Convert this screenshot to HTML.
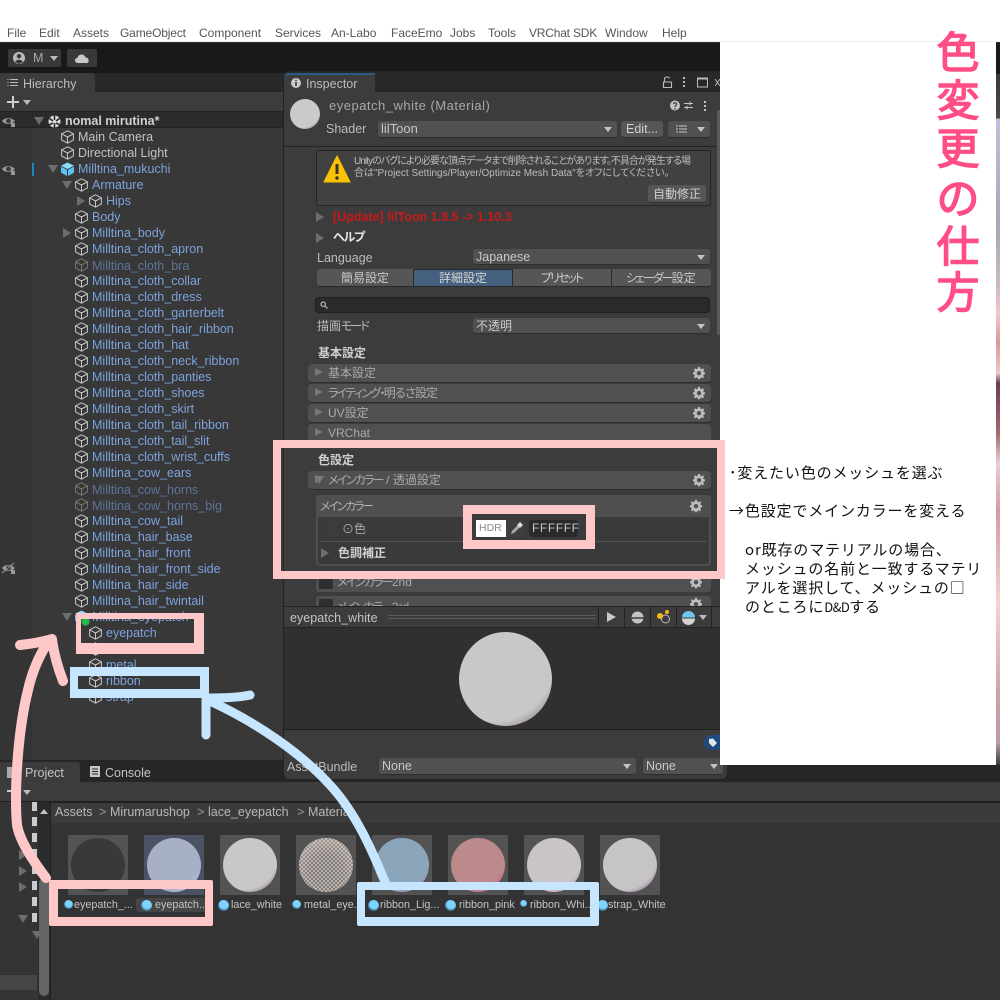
<!DOCTYPE html>
<html lang="ja"><head><meta charset="utf-8"><title>色変更の仕方</title>
<style>
html,body{margin:0;padding:0;width:1000px;height:1000px;overflow:hidden;background:#333}
body{position:relative;font-family:"Liberation Sans","Noto Sans CJK JP",sans-serif;font-size:12.5px;color:#c4c4c4;font-feature-settings:"palt"}
div,span.a{position:absolute;box-sizing:border-box}
.t{position:absolute;white-space:nowrap;line-height:16px;height:16px}
.m{top:25px;color:#555;font-size:12px}
.h{color:#7ba3dc;left:92px}
.h2{color:#7ba3dc;left:106px}
.dim{color:#5d7499}
svg{position:absolute;overflow:visible}
.dd{position:absolute;background:#515151;border-radius:3px;height:16px;line-height:16px;padding-left:3px;color:#c8c8c8;border-bottom:1px solid #2e2e2e}
.dd:after{content:"";position:absolute;right:5px;top:6px;border:4px solid transparent;border-top:5px solid #c4c4c4;border-bottom:0}
.btn{position:absolute;background:#565656;border-radius:3px;text-align:center;height:16px;line-height:16px;color:#d0d0d0;border-bottom:1px solid #2e2e2e}
.fold{position:absolute;left:308px;width:403px;height:19px;background:#505050;border-radius:4px;line-height:18px;padding-left:20px;color:#aaa;font-size:12px;border-bottom:1px solid #2c2c2c}
.fold:before{content:"";position:absolute;left:7px;top:4px;border:4.5px solid transparent;border-left:8px solid #777;border-right:0}
.j{font-size:12px}
.k{letter-spacing:-1.7px}
.b{font-weight:bold}
.thumb{position:absolute;top:835px;width:60px;height:60px;background:#535353}
.ball{position:absolute;left:3px;top:3px;width:54px;height:54px;border-radius:50%}
.lab{position:absolute;top:898px;font-size:10.8px;line-height:14px;color:#c4c4c4;white-space:nowrap}
.mi{position:absolute;top:900px;width:9px;height:9px;border-radius:50%;background:radial-gradient(circle at 55% 40%,#7fd4ff 45%,#2a5f80 75%)}
.tri{position:absolute;width:0;height:0;border:5px solid transparent;border-left:8px solid #6d6d6d;border-right:0}
.tri2{position:absolute;width:0;height:0;border:5px solid transparent;border-top:8px solid #6d6d6d;border-bottom:0}
.anno{position:absolute;font-family:"WenQuanYi Zen Hei","Noto Sans CJK JP",sans-serif;font-feature-settings:normal;color:#111;font-size:15px;line-height:19px;letter-spacing:.85px;white-space:nowrap}
.title{position:absolute;left:935px;width:46px;height:46px;line-height:46px;text-align:center;font-family:"WenQuanYi Zen Hei","Noto Sans CJK JP",sans-serif;font-feature-settings:normal;font-size:43px;color:#ff4d85;-webkit-text-stroke:1.4px #ff4d85;paint-order:stroke}
.gear{position:absolute;left:693px;width:12px;height:12px}
</style></head>
<body>
<svg width="0" height="0" style="position:absolute"><defs>
<g id="c" fill="none" stroke="#c8c8c8" stroke-width="1"><path d="M6.5.8 12.4 3.8V10L6.5 13.2.6 10V3.8ZM.8 3.9 6.5 7 12.2 3.9M6.5 7V13"/></g>
<g id="gr"><path fill="#bdbdbd" fill-rule="evenodd" d="M5 0H7L7.3 1.6 8.6 2.2 10 1.3 11.2 2.7 10.2 3.9 10.7 5.1 12 5.4V7.2L10.7 7.5 10.2 8.8 11 10.1 9.8 11.3 8.5 10.4 7.3 11 7 12.2H5L4.7 11 3.4 10.4 2.1 11.3.9 10.1 1.8 8.8 1.2 7.5 0 7.2V5.4L1.2 5.1 1.8 3.9.9 2.7 2.1 1.3 3.4 2.2 4.7 1.6ZM6 4A2.2 2.2 0 1 0 6 8.4 2.2 2.2 0 1 0 6 4Z"/></g>
<g id="eye"><path d="M1 6C4 2 10 2 14 6 10 10 4 10 1 6Z" fill="#9a9a9a"/><circle cx="7.5" cy="6" r="2.4" fill="#3a3a3a"/><rect x="10" y="8" width="4" height="4" fill="#9a9a9a"/></g>
</defs></svg>

<!-- menu -->
<div style="left:0;top:0;width:1000px;height:42px;background:#fff;border-bottom:1px solid #eee"></div>
<span class="t m" style="left:7px">File</span>
<span class="t m" style="left:39px">Edit</span>
<span class="t m" style="left:73px">Assets</span>
<span class="t m" style="left:120px;letter-spacing:-.15px">GameObject</span>
<span class="t m" style="left:199px">Component</span>
<span class="t m" style="left:275px">Services</span>
<span class="t m" style="left:331px">An-Labo</span>
<span class="t m" style="left:391px">FaceEmo</span>
<span class="t m" style="left:450px">Jobs</span>
<span class="t m" style="left:488px">Tools</span>
<span class="t m" style="left:529px;letter-spacing:-.2px">VRChat SDK</span>
<span class="t m" style="left:605px">Window</span>
<span class="t m" style="left:662px">Help</span>

<!-- toolbar -->
<div style="left:0;top:43px;width:1000px;height:30px;background:#191919"></div>
<div style="left:8px;top:49px;width:53px;height:18px;background:#383838;border-radius:2px"></div>
<svg style="left:12px;top:51px" width="14" height="14"><circle cx="7" cy="7" r="6" fill="#bbb"/><circle cx="7" cy="5.2" r="2.2" fill="#383838"/><path d="M3 11C4 8 10 8 11 11L7 13Z" fill="#383838"/></svg>
<span class="t" style="left:33px;top:50px;color:#aaa">M</span>
<div style="left:50px;top:56px;border:4px solid transparent;border-top:5px solid #bbb;border-bottom:0"></div>
<div style="left:67px;top:49px;width:30px;height:18px;background:#383838;border-radius:2px"></div>
<svg style="left:74px;top:52px" width="16" height="12"><path d="M4 11C0 11 0 6 3.5 6 4 2 10 1 11.5 5.5 15 5 16 11 12.5 11Z" fill="#c8c8c8"/></svg>

<!-- hierarchy -->
<div style="left:0;top:73px;width:283px;height:19px;background:#282828"></div>
<div style="left:0;top:73px;width:95px;height:19px;background:#3c3c3c;border-radius:0 3px 0 0"></div>
<svg style="left:7px;top:78px" width="12" height="10"><path d="M3 1.5H11M3 4.5H11M3 7.5H11" stroke="#bbb"/><path d="M0 1.5H2M0 4.5H2M0 7.5H2" stroke="#888"/></svg>
<span class="t" style="left:23px;top:76px;color:#bcbcbc">Hierarchy</span>
<div style="left:0;top:92px;width:283px;height:20px;background:#3c3c3c;border-bottom:1px solid #232323"></div>
<svg style="left:7px;top:96px" width="12" height="13"><path d="M6 0V12M0 6H12" stroke="#cfcfcf" stroke-width="2"/></svg>
<div style="left:23px;top:100px;border:4px solid transparent;border-top:5px solid #bbb;border-bottom:0"></div>
<div style="left:0;top:112px;width:283px;height:650px;background:#383838"></div>
<div style="left:0;top:112px;width:32px;height:650px;background:#343434"></div>
<div style="left:0;top:112px;width:283px;height:16px;background:#2b2b2b;border-bottom:1px solid #222"></div>
<svg style="left:1px;top:115px" width="15" height="13"><use href="#eye"/></svg>
<svg style="left:1px;top:163px" width="15" height="13"><use href="#eye"/></svg>
<svg style="left:1px;top:562px" width="15" height="13"><use href="#eye"/><path d="M1 11 13 1" stroke="#9a9a9a"/></svg>
<div style="left:32px;top:163px;width:2px;height:13px;background:#1c85c4"></div>

<div class="tri2" style="left:34px;top:117px"></div>
<svg style="left:48px;top:115px" width="13" height="13"><circle cx="6.5" cy="6.5" r="6" fill="#ddd"/><path d="M6.5 0V5M6.5 8V13M1 3 5 6M12 3 8 6M1 10 5 8M12 10 8 8" stroke="#2b2b2b" stroke-width="1.6"/></svg>
<span class="t b" style="left:65px;top:113px;color:#d0d0d0">nomal mirutina*</span>

<svg style="left:61px;top:130px" width="14" height="14"><use href="#c"/></svg><span class="t" style="left:78px;top:129px">Main Camera</span>
<svg style="left:61px;top:146px" width="14" height="14"><use href="#c"/></svg><span class="t" style="left:78px;top:145px">Directional Light</span>
<div class="tri2" style="left:48px;top:165px"></div>
<svg style="left:61px;top:162px" width="14" height="14"><path d="M6.5.5 13 3.8 6.5 7 0 3.8Z" fill="#8fdcff"/><path d="M0 4.6 6 7.8V14L0 10.6ZM13 4.6 7 7.8V14L13 10.6Z" fill="#5cc3f2"/></svg><span class="t h" style="left:78px;top:161px">Milltina_mukuchi</span>
<div class="tri2" style="left:62px;top:181px"></div>
<svg style="left:75px;top:178px" width="14" height="14"><use href="#c"/></svg><span class="t h" style="top:177px">Armature</span>
<div class="tri" style="left:77px;top:196px"></div>
<svg style="left:89px;top:194px" width="14" height="14"><use href="#c"/></svg><span class="t h2" style="top:193px">Hips</span>
<svg style="left:75px;top:210px" width="14" height="14"><use href="#c"/></svg><span class="t h" style="top:209px">Body</span>
<div class="tri" style="left:63px;top:228px"></div>
<svg style="left:75px;top:226px" width="14" height="14"><use href="#c"/></svg><span class="t h" style="top:225px">Milltina_body</span>
<svg style="left:75px;top:242px" width="14" height="14"><use href="#c"/></svg><span class="t h" style="top:241px">Milltina_cloth_apron</span>
<svg style="left:75px;top:258px;opacity:.45" width="14" height="14"><use href="#c"/></svg><span class="t h dim" style="top:258px">Milltina_cloth_bra</span>
<svg style="left:75px;top:274px" width="14" height="14"><use href="#c"/></svg><span class="t h" style="top:273px">Milltina_cloth_collar</span>
<svg style="left:75px;top:290px" width="14" height="14"><use href="#c"/></svg><span class="t h" style="top:289px">Milltina_cloth_dress</span>
<svg style="left:75px;top:306px" width="14" height="14"><use href="#c"/></svg><span class="t h" style="top:305px">Milltina_cloth_garterbelt</span>
<svg style="left:75px;top:322px" width="14" height="14"><use href="#c"/></svg><span class="t h" style="top:321px">Milltina_cloth_hair_ribbon</span>
<svg style="left:75px;top:338px" width="14" height="14"><use href="#c"/></svg><span class="t h" style="top:337px">Milltina_cloth_hat</span>
<svg style="left:75px;top:354px" width="14" height="14"><use href="#c"/></svg><span class="t h" style="top:353px">Milltina_cloth_neck_ribbon</span>
<svg style="left:75px;top:370px" width="14" height="14"><use href="#c"/></svg><span class="t h" style="top:369px">Milltina_cloth_panties</span>
<svg style="left:75px;top:386px" width="14" height="14"><use href="#c"/></svg><span class="t h" style="top:385px">Milltina_cloth_shoes</span>
<svg style="left:75px;top:402px" width="14" height="14"><use href="#c"/></svg><span class="t h" style="top:401px">Milltina_cloth_skirt</span>
<svg style="left:75px;top:418px" width="14" height="14"><use href="#c"/></svg><span class="t h" style="top:417px">Milltina_cloth_tail_ribbon</span>
<svg style="left:75px;top:434px" width="14" height="14"><use href="#c"/></svg><span class="t h" style="top:433px">Milltina_cloth_tail_slit</span>
<svg style="left:75px;top:450px" width="14" height="14"><use href="#c"/></svg><span class="t h" style="top:449px">Milltina_cloth_wrist_cuffs</span>
<svg style="left:75px;top:466px" width="14" height="14"><use href="#c"/></svg><span class="t h" style="top:465px">Milltina_cow_ears</span>
<svg style="left:75px;top:482px;opacity:.45" width="14" height="14"><use href="#c"/></svg><span class="t h dim" style="top:482px">Milltina_cow_horns</span>
<svg style="left:75px;top:498px;opacity:.45" width="14" height="14"><use href="#c"/></svg><span class="t h dim" style="top:498px">Milltina_cow_horns_big</span>
<svg style="left:75px;top:514px" width="14" height="14"><use href="#c"/></svg><span class="t h" style="top:513px">Milltina_cow_tail</span>
<svg style="left:75px;top:530px" width="14" height="14"><use href="#c"/></svg><span class="t h" style="top:529px">Milltina_hair_base</span>
<svg style="left:75px;top:546px" width="14" height="14"><use href="#c"/></svg><span class="t h" style="top:545px">Milltina_hair_front</span>
<svg style="left:75px;top:562px" width="14" height="14"><use href="#c"/></svg><span class="t h" style="top:561px">Milltina_hair_front_side</span>
<svg style="left:75px;top:578px" width="14" height="14"><use href="#c"/></svg><span class="t h" style="top:577px">Milltina_hair_side</span>
<svg style="left:75px;top:594px" width="14" height="14"><use href="#c"/></svg><span class="t h" style="top:593px">Milltina_hair_twintail</span>
<div class="tri2" style="left:62px;top:613px"></div>
<svg style="left:75px;top:610px" width="14" height="14"><path d="M6.5.5 13 3.8 6.5 7 0 3.8Z" fill="#8fdcff"/><path d="M0 4.6 6 7.8V14L0 10.6ZM13 4.6 7 7.8V14L13 10.6Z" fill="#5cc3f2"/></svg>
<span class="t h" style="top:609px">Milltina_eyepatch</span>
<svg style="left:81px;top:617px" width="9" height="9"><circle cx="4.5" cy="4.5" r="4.2" fill="#2fa84f"/><path d="M4.5 2V7M2 4.5H7" stroke="#0d3" stroke-width="1"/></svg>
<svg style="left:89px;top:626px" width="14" height="14"><use href="#c"/></svg><span class="t h2" style="top:625px">eyepatch</span>
<svg style="left:89px;top:642px" width="14" height="14"><use href="#c"/></svg><span class="t h2" style="top:641px">lace</span>
<svg style="left:89px;top:658px" width="14" height="14"><use href="#c"/></svg><span class="t h2" style="top:657px">metal</span>
<svg style="left:89px;top:674px" width="14" height="14"><use href="#c"/></svg><span class="t h2" style="top:673px">ribbon</span>
<svg style="left:89px;top:690px" width="14" height="14"><use href="#c"/></svg><span class="t h2" style="top:689px">strap</span>

<!-- project panel -->
<div style="left:0;top:760px;width:1000px;height:240px;background:#333"></div>
<div style="left:0;top:760px;width:1000px;height:22px;background:#262626"></div>
<div style="left:0;top:762px;width:80px;height:20px;background:#3c3c3c;border-radius:0 3px 0 0"></div>
<svg style="left:7px;top:767px" width="14" height="11"><path d="M0 0H5L7 2H14V11H0Z" fill="#aaa"/></svg>
<span class="t" style="left:25px;top:765px;color:#c4c4c4">Project</span>
<svg style="left:90px;top:766px" width="10" height="11"><rect width="10" height="11" fill="#c8c8c8"/><path d="M2 3H8M2 5.5H8M2 8H8" stroke="#262626"/></svg>
<span class="t" style="left:105px;top:765px;color:#c4c4c4">Console</span>
<div style="left:0;top:782px;width:1000px;height:20px;background:#3c3c3c;border-bottom:1px solid #1f1f1f"></div>
<svg style="left:7px;top:785px" width="12" height="13"><path d="M6 0V12M0 6H12" stroke="#cfcfcf" stroke-width="2"/></svg>
<div style="left:23px;top:790px;border:4px solid transparent;border-top:5px solid #bbb;border-bottom:0"></div>
<div style="left:50px;top:802px;width:950px;height:1px;background:#222"></div>
<div style="left:0;top:802px;width:38px;height:198px;background:#343434"></div>
<div style="left:38px;top:802px;width:12px;height:198px;background:#2b2b2b"></div>
<div style="left:50px;top:802px;width:1px;height:198px;background:#1f1f1f"></div>
<div style="left:51px;top:803px;width:949px;height:20px;background:#3b3b3b"></div>
<div style="left:39px;top:878px;width:10px;height:118px;background:#646464;border-radius:5px"></div>
<div style="left:40px;top:809px;border:4px solid transparent;border-bottom:5px solid #c4c4c4;border-top:0"></div>
<div style="left:0;top:975px;width:37px;height:15px;background:#464646"></div>
<div style="left:32px;top:802px;width:5px;height:9px;background:#ccc"></div>
<div style="left:32px;top:817px;width:5px;height:9px;background:#ccc"></div>
<div style="left:32px;top:833px;width:5px;height:9px;background:#ccc"></div>
<div style="left:32px;top:849px;width:5px;height:9px;background:#ccc"></div>
<div style="left:32px;top:865px;width:5px;height:9px;background:#ccc"></div>
<div style="left:32px;top:881px;width:5px;height:9px;background:#ccc"></div>
<div style="left:32px;top:897px;width:5px;height:9px;background:#ccc"></div>
<div style="left:32px;top:913px;width:5px;height:9px;background:#ccc"></div>
<div class="tri" style="left:19px;top:850px"></div>
<div class="tri" style="left:19px;top:866px"></div>
<div class="tri" style="left:19px;top:882px"></div>
<div class="tri2" style="left:18px;top:915px"></div>
<div class="tri2" style="left:32px;top:931px"></div>
<span class="t" style="left:55px;top:804px;color:#b8b8b8">Assets</span>
<span class="t" style="left:99px;top:804px;color:#999">&gt;</span>
<span class="t" style="left:110px;top:804px;color:#b8b8b8">Mirumarushop</span>
<span class="t" style="left:197px;top:804px;color:#999">&gt;</span>
<span class="t" style="left:208px;top:804px;color:#b8b8b8">lace_eyepatch</span>
<span class="t" style="left:297px;top:804px;color:#999">&gt;</span>
<span class="t" style="left:308px;top:804px;color:#b8b8b8">Material</span>

<div class="thumb" style="left:68px"><div class="ball" style="background:#393939"></div></div>
<div class="thumb" style="left:144px;background:#4a5263"><div class="ball" style="background:radial-gradient(circle at 38% 32%,#a8b0c6 69%,#bcb6d6 78%)"></div></div>
<div class="thumb" style="left:220px"><div class="ball" style="background:radial-gradient(circle at 38% 32%,#c9c7c8 69%,#a99ea6 78%)"></div></div>
<div class="thumb" style="left:296px"><div class="ball" style="background:radial-gradient(circle at 50% 60%,rgba(185,178,172,.55) 40%,rgba(205,195,190,.7) 72%),repeating-conic-gradient(#bdb7b4 0 25%,#37322f 0 50%) 0 0/4px 4px"></div></div>
<div class="thumb" style="left:372px"><div class="ball" style="background:radial-gradient(circle at 38% 32%,#8ba5bb 69%,#9c95bd 78%)"></div></div>
<div class="thumb" style="left:448px"><div class="ball" style="background:radial-gradient(circle at 38% 32%,#bd8a8c 69%,#c66a88 78%)"></div></div>
<div class="thumb" style="left:524px"><div class="ball" style="background:radial-gradient(circle at 38% 32%,#c9c5c7 69%,#c2a8c0 78%)"></div></div>
<div class="thumb" style="left:600px"><div class="ball" style="background:radial-gradient(circle at 38% 32%,#c6c4c5 69%,#a997ad 78%)"></div></div>

<div class="mi" style="left:64px"></div><span class="lab" style="left:74px">eyepatch_...</span>
<div style="left:136px;top:898px;width:70px;height:14px;background:#454545;border-radius:3px"></div>
<div class="mi" style="left:141px;width:11px;height:11px"></div><span class="lab" style="left:155px">eyepatch...</span>
<div class="mi" style="left:218px;width:11px;height:11px"></div><span class="lab" style="left:231px">lace_white</span>
<div class="mi" style="left:292px"></div><span class="lab" style="left:304px">metal_eye...</span>
<div class="mi" style="left:368px;width:11px;height:11px"></div><span class="lab" style="left:380px">ribbon_Lig...</span>
<div class="mi" style="left:445px;width:11px;height:11px"></div><span class="lab" style="left:459px">ribbon_pink</span>
<div class="mi" style="left:520px;width:7px;height:7px"></div><span class="lab" style="left:530px">ribbon_Whi...</span>
<div class="mi" style="left:597px;width:11px;height:11px"></div><span class="lab" style="left:608px">strap_White</span>

<!-- inspector -->
<div style="left:283px;top:71px;width:445px;height:709px;background:#3c3c3c;border-radius:6px;border:1px solid #232323"></div>
<div style="left:284px;top:72px;width:443px;height:20px;background:#282828;border-radius:6px 6px 0 0"></div>
<div style="left:284px;top:73px;width:91px;height:19px;background:#3c3c3c;border-top:2px solid #2a5a82;border-radius:4px 0 0 0"></div>
<svg style="left:291px;top:78px" width="10" height="10"><circle cx="5" cy="5" r="5" fill="#c8c8c8"/><path d="M5 4V8M5 1.8V3" stroke="#333" stroke-width="1.6"/></svg>
<span class="t" style="left:306px;top:76px;color:#bcbcbc">Inspector</span>
<svg style="left:662px;top:76px" width="60" height="12"><path d="M1.500 6H9.500V11.500H1.500ZM2.500 6V2.500C3 .5 7 .5 7.500 2.500" fill="none" stroke="#bbb" stroke-width="1.100"/><rect x="21" y="1" width="2" height="2" fill="#bbb"/><rect x="21" y="5" width="2" height="2" fill="#bbb"/><rect x="21" y="9" width="2" height="2" fill="#bbb"/><path d="M35.500 2H45.500V11H35.500Z" fill="none" stroke="#bbb"/><path d="M35.500 2.500H45.500" stroke="#bbb" stroke-width="2"/><path d="M53 3 58 10M58 3 53 10" stroke="#bbb"/></svg>

<div style="left:290px;top:99px;width:30px;height:30px;border-radius:50%;background:radial-gradient(circle at 38% 32%,#cbc9ca 69%,#aba2a7 78%)"></div>
<span class="t" style="left:329px;top:98px;color:#a8a8a8;font-size:13px;letter-spacing:.5px">eyepatch_white (Material)</span>
<svg style="left:670px;top:100px" width="40" height="11"><circle cx="5" cy="5.500" r="5" fill="#c4c4c4"/><path d="M3.500 4C4 2 7 2.500 6.500 4.500 6 5.500 5 5.500 5 7M5 8V9.500" stroke="#3c3c3c" stroke-width="1.200" fill="none"/><path d="M14 3.500H23M14 7.500H23M20 1.500V5.500M17 5.500V9.500" stroke="#c4c4c4"/><rect x="34" y="1" width="2" height="2" fill="#c4c4c4"/><rect x="34" y="5" width="2" height="2" fill="#c4c4c4"/><rect x="34" y="9" width="2" height="2" fill="#c4c4c4"/></svg>
<span class="t" style="left:326px;top:121px;color:#bcbcbc">Shader</span>
<div class="dd" style="left:378px;top:121px;width:239px;height:17px;font-size:13px">lilToon</div>
<div class="btn" style="left:621px;top:121px;width:42px;height:17px">Edit...</div>
<div class="dd" style="left:668px;top:121px;width:42px;height:17px"></div>
<svg style="left:676px;top:125px" width="11" height="9"><path d="M3 1H11M3 4H11M3 7H11M0 1H2M0 4H2M0 7H2" stroke="#c8c8c8"/></svg>
<div style="left:284px;top:146px;width:434px;height:1px;background:#232323"></div>
<div style="left:717px;top:110px;width:4px;height:225px;background:#5a5a5a;border-radius:2px"></div>

<div style="left:316px;top:150px;width:395px;height:56px;background:#414141;border:1px solid #252525;border-radius:3px"></div>
<svg style="left:323px;top:155px" width="28" height="28"><path d="M14 1 27 27H1Z" fill="#fbc203" stroke="#fbc203" stroke-linejoin="round" stroke-width="1"/><path d="M14 9V19" stroke="#333" stroke-width="3"/><circle cx="14" cy="23" r="1.700" fill="#333"/></svg>
<span class="t j" style="left:354px;top:154px;font-size:10px;color:#bdbdbd;letter-spacing:-.95px">Unityのバグにより必要な頂点データまで削除されることがあります。不具合が発生する場</span>
<span class="t j" style="left:354px;top:166px;font-size:10px;color:#bdbdbd">合は"Project Settings/Player/Optimize Mesh Data"をオフにしてください。</span>
<div class="btn" style="left:648px;top:185px;width:58px;height:18px;line-height:18px;font-size:12px">自動修正</div>

<div class="tri" style="left:316px;top:212px"></div>
<span class="t b" style="left:333px;top:209px;color:#c71a1a;font-size:12.5px">[Update] lilToon 1.8.5 -&gt; 1.10.3</span>
<div class="tri" style="left:316px;top:233px"></div>
<span class="t b" style="left:333px;top:229px;color:#e6e6e6;font-size:12px;letter-spacing:-1.2px">ヘルプ</span>
<span class="t" style="left:317px;top:250px;color:#bcbcbc">Language</span>
<div class="dd" style="left:473px;top:249px;width:237px">Japanese</div>

<div style="left:317px;top:269px;width:394px;height:18px;background:#565656;border-radius:3px;border-bottom:1px solid #2a2a2a"></div>
<div style="left:413px;top:269px;width:100px;height:18px;background:#46607f;border:1px solid #2a2a2a"></div>
<div style="left:611px;top:269px;width:1px;height:18px;background:#2a2a2a"></div>
<span class="t j" style="left:341px;top:270px;color:#c8c8c8">簡易設定</span>
<span class="t j" style="left:439px;top:270px;color:#d6d6d6">詳細設定</span>
<span class="t j" style="left:541px;top:270px;color:#c8c8c8;letter-spacing:-2px">プリセット</span>
<span class="t j" style="left:626px;top:270px;color:#c8c8c8"><span style="letter-spacing:-2px">シェーダー</span>設定</span>

<div style="left:315px;top:297px;width:395px;height:16px;background:#2a2a2a;border-radius:4px;border:1px solid #1f1f1f"></div>
<svg style="left:320px;top:301px" width="8" height="8"><circle cx="3.200" cy="3.200" r="2.200" fill="none" stroke="#bbb" stroke-width="1.200"/><path d="M5 5 7.500 7.500" stroke="#bbb" stroke-width="1.200"/></svg>
<span class="t j" style="left:317px;top:318px;color:#bcbcbc">描画<span style="letter-spacing:-2px">モード</span></span>
<div class="dd j" style="left:473px;top:318px;width:237px">不透明</div>
<span class="t j b" style="left:318px;top:345px;color:#d0d0d0">基本設定</span>

<div class="fold" style="top:364px">基本設定</div>
<div class="fold" style="top:384px"><span class="k">ライティング・</span><span style="letter-spacing:-.8px">明るさ設定</span></div>
<div class="fold" style="top:404px">UV設定</div>
<div class="fold" style="top:424px;height:24px">VRChat</div>
<svg class="gear" style="top:367px" width="12" height="12"><use href="#gr"/></svg>
<svg class="gear" style="top:387px" width="12" height="12"><use href="#gr"/></svg>
<svg class="gear" style="top:407px" width="12" height="12"><use href="#gr"/></svg>

<span class="t j b" style="left:318px;top:452px;color:#d0d0d0">色設定</span>
<div class="fold" style="top:471px"><span class="k">メインカラー</span> / 透過設定</div>
<div class="tri2" style="left:314px;top:476px;border-top-color:#7a7a7a;border-width:8px 5px 0"></div>
<svg class="gear" style="top:474px" width="12" height="12"><use href="#gr"/></svg>

<div style="left:316px;top:495px;width:395px;height:71px;background:#3a3a3a;border:2px solid #4f4f4f;border-radius:4px"></div>
<div style="left:316px;top:495px;width:395px;height:22px;background:#4f4f4f;border-radius:4px 4px 0 0"></div>
<span class="t j k" style="left:320px;top:499px;color:#b4b4b4;font-size:11.500px">メインカラー</span>
<svg class="gear" style="left:690px;top:500px" width="12" height="12"><use href="#gr"/></svg>
<div style="left:322px;top:520px;width:16px;height:17px;background:#3c3c3c"></div>
<span class="t j" style="left:342px;top:521px;color:#a8a8a8">⊙色</span>
<div style="left:320px;top:541px;width:386px;height:1px;background:#555"></div>
<div class="tri" style="left:321px;top:548px"></div>
<span class="t j b" style="left:338px;top:545px;color:#d0d0d0">色調補正</span>

<!-- below -->
<div style="left:316px;top:573px;width:395px;height:19px;background:#505050;border-radius:3px"></div>
<div style="left:319px;top:576px;width:14px;height:13px;background:#2f2f2f"></div>
<span class="t j" style="left:337px;top:574px;color:#a8a8a8"><span class="k">メインカラー</span>2nd</span>
<svg class="gear" style="left:690px;top:576px" width="12" height="12"><use href="#gr"/></svg>
<div style="left:316px;top:596px;width:395px;height:10px;background:#505050;border-radius:3px 3px 0 0"></div>
<div style="left:319px;top:599px;width:14px;height:7px;background:#2f2f2f"></div>
<span class="t j" style="left:337px;top:599px;height:7px;overflow:hidden;color:#a8a8a8"><span class="k">メインカラー</span>3rd</span>
<svg class="gear" style="left:690px;top:598px;height:8px" width="12" height="8" viewBox="0 0 12 8"><use href="#gr"/></svg>

<!-- preview -->
<div style="left:284px;top:606px;width:436px;height:22px;background:#3c3c3c;border-top:1px solid #222;border-bottom:1px solid #222"></div>
<span class="t" style="left:290px;top:610px;color:#c4c4c4;letter-spacing:.05px">eyepatch_white</span>
<div style="left:388px;top:615px;width:208px;height:4px;border-top:1px solid #5c5c5c;border-bottom:1px solid #5c5c5c"></div>
<div style="left:598px;top:607px;width:1px;height:20px;background:#232323"></div>
<div style="left:624px;top:607px;width:1px;height:20px;background:#232323"></div>
<div style="left:650px;top:607px;width:1px;height:20px;background:#232323"></div>
<div style="left:676px;top:607px;width:1px;height:20px;background:#232323"></div>
<div style="left:711px;top:607px;width:1px;height:20px;background:#232323"></div>
<svg style="left:606px;top:611px" width="11" height="12"><path d="M1 1 10 6 1 11Z" fill="#c8c8c8"/></svg>
<svg style="left:631px;top:611px" width="13" height="13"><circle cx="6.500" cy="6.500" r="6" fill="#c4c4c4"/><path d="M0 7H13" stroke="#3c3c3c" stroke-width="1.500"/></svg>
<svg style="left:656px;top:609px" width="16" height="16"><circle cx="4" cy="7" r="3" fill="#f6b80d"/><circle cx="11" cy="3" r="2" fill="#f6b80d"/><circle cx="9.500" cy="10" r="4" fill="none" stroke="#bbb"/></svg>
<svg style="left:682px;top:611px" width="13" height="13"><path d="M0 6.500A6.500 6.500 0 0 1 13 6.500Z" fill="#6fc6f2"/><path d="M0 7.500H13A6.500 6.500 0 0 1 0 7.500Z" fill="#d4d4d4"/></svg>
<div style="left:699px;top:615px;border:4px solid transparent;border-top:5px solid #bbb;border-bottom:0"></div>
<div style="left:284px;top:628px;width:436px;height:101px;background:#303030"></div>
<div style="left:284px;top:729px;width:436px;height:1px;background:#1e1e1e"></div>
<div style="left:459px;top:632px;width:93px;height:94px;border-radius:50%;background:radial-gradient(circle at 38% 32%,#c8c8c8 69%,#aca2a8 78%)"></div>
<svg style="left:704px;top:735px" width="16" height="15"><rect width="24" height="15" rx="7.500" fill="#1f4a80"/><path d="M5 4 9 3.500 13 8 9 12 5 8Z" fill="#e6e6e6"/></svg>
<span class="t" style="left:287px;top:759px;color:#bcbcbc">AssetBundle</span>
<div class="dd" style="left:379px;top:758px;width:257px;height:17px">None</div>
<div class="dd" style="left:643px;top:758px;width:80px;height:17px">None</div>

<!-- right side -->
<div style="left:996px;top:43px;width:4px;height:722px;background:linear-gradient(180deg,#191919 0,#191919 30px,#3a3a3a 32px,#4a4a4a 75px,#bfc0d8 76px,#a9a6b8 180px,#c9b8c0 240px,#f0c8c8 270px,#d89a9f 300px,#eec9c7 330px,#6d3f52 340px,#a06a6c 390px,#e8cfd0 420px,#d49ba0 470px,#f2d5d0 560px,#caa5a5 650px,#b79ca2 700px,#3a3a3a 722px)"></div>
<div style="left:996px;top:765px;width:4px;height:17px;background:#262626"></div>
<div style="left:720px;top:42px;width:276px;height:723px;background:#fff"></div>

<!-- annotations -->
<div style="left:273px;top:440px;width:452px;height:139px;border:8.500px solid #ffc8c8"></div>
<div style="left:463px;top:505px;width:132px;height:44px;border:9px solid #ffc8c8;background:#3b3b3b"></div>
<div style="left:476px;top:520px;width:48px;height:17px;background:#3f3f3f;border-radius:2px"></div>
<div style="left:476px;top:520px;width:30px;height:17px;background:#fff;color:#8a8a8a;font-size:10.500px;line-height:17px;padding-left:3px">HDR</div>
<svg style="left:510px;top:522px" width="13" height="13"><path d="M1 12 2 9 8 3 10 5 4 11Z" fill="#aaa"/><path d="M7 3 10 0 13 3 10 6Z" fill="#ddd"/></svg>
<div style="left:529px;top:520px;width:49px;height:17px;background:#2a2a2a;border-radius:3px;color:#c8c8c8;line-height:17px;padding-left:3px;font-size:12px;letter-spacing:.6px">FFFFFF</div>

<div style="left:76px;top:613px;width:128px;height:41px;border:solid #ffc8c8;border-width:6px 10px 11px 5px"></div>
<div style="left:70px;top:667px;width:139px;height:31px;border:solid #c6e6ff;border-width:9px 9px 9px 8px"></div>
<div style="left:49px;top:880px;width:164px;height:46px;border:solid #ffc8c8;border-width:9px 8px 9px 9px;border-radius:2px"></div>
<div style="left:357px;top:882px;width:242px;height:44px;border:solid #c6e6ff;border-width:8px 9px 9px 8px;border-radius:2px"></div>

<svg style="left:0;top:0" width="1000" height="1000">
<path d="M46 878C34 862 20 842 17 825 14 790 18 730 28 690 33 668 42 650 50 640" fill="none" stroke="#ffc8c8" stroke-width="10" stroke-linecap="round"/>
<path d="M20 645C30 644 42 642 52 639M52 640C54 654 58 668 63 681" fill="none" stroke="#ffc8c8" stroke-width="10" stroke-linecap="round"/>
<path d="M386 884C375 858 358 815 330 785 300 752 255 722 212 702" fill="none" stroke="#c6e6ff" stroke-width="9" stroke-linecap="round"/>
<path d="M206 698C220 698 236 698 250 695M206 698C206 710 206 722 206 735" fill="none" stroke="#c6e6ff" stroke-width="9" stroke-linecap="round"/>
</svg>

<div class="title" style="top:27px">色</div>
<div class="title" style="top:75px">変</div>
<div class="title" style="top:123px">更</div>
<div class="title" style="top:173px;font-size:43px">の</div>
<div class="title" style="top:221px">仕</div>
<div class="title" style="top:267px">方</div>

<div class="anno" style="left:729px;top:463px">･変えたい色のメッシュを選ぶ</div>
<div class="anno" style="left:729px;top:501px">→色設定でメインカラーを変える</div>
<div class="anno" style="left:745px;top:540px">or既存のマテリアルの場合、</div>
<div class="anno" style="left:745px;top:559px">メッシュの名前と一致するマテリ</div>
<div class="anno" style="left:745px;top:578px">アルを選択して、メッシュの□</div>
<div class="anno" style="left:745px;top:597px">のところに<span style="font-size:13px;letter-spacing:-.6px">D&amp;D</span>する</div>
</body></html>
